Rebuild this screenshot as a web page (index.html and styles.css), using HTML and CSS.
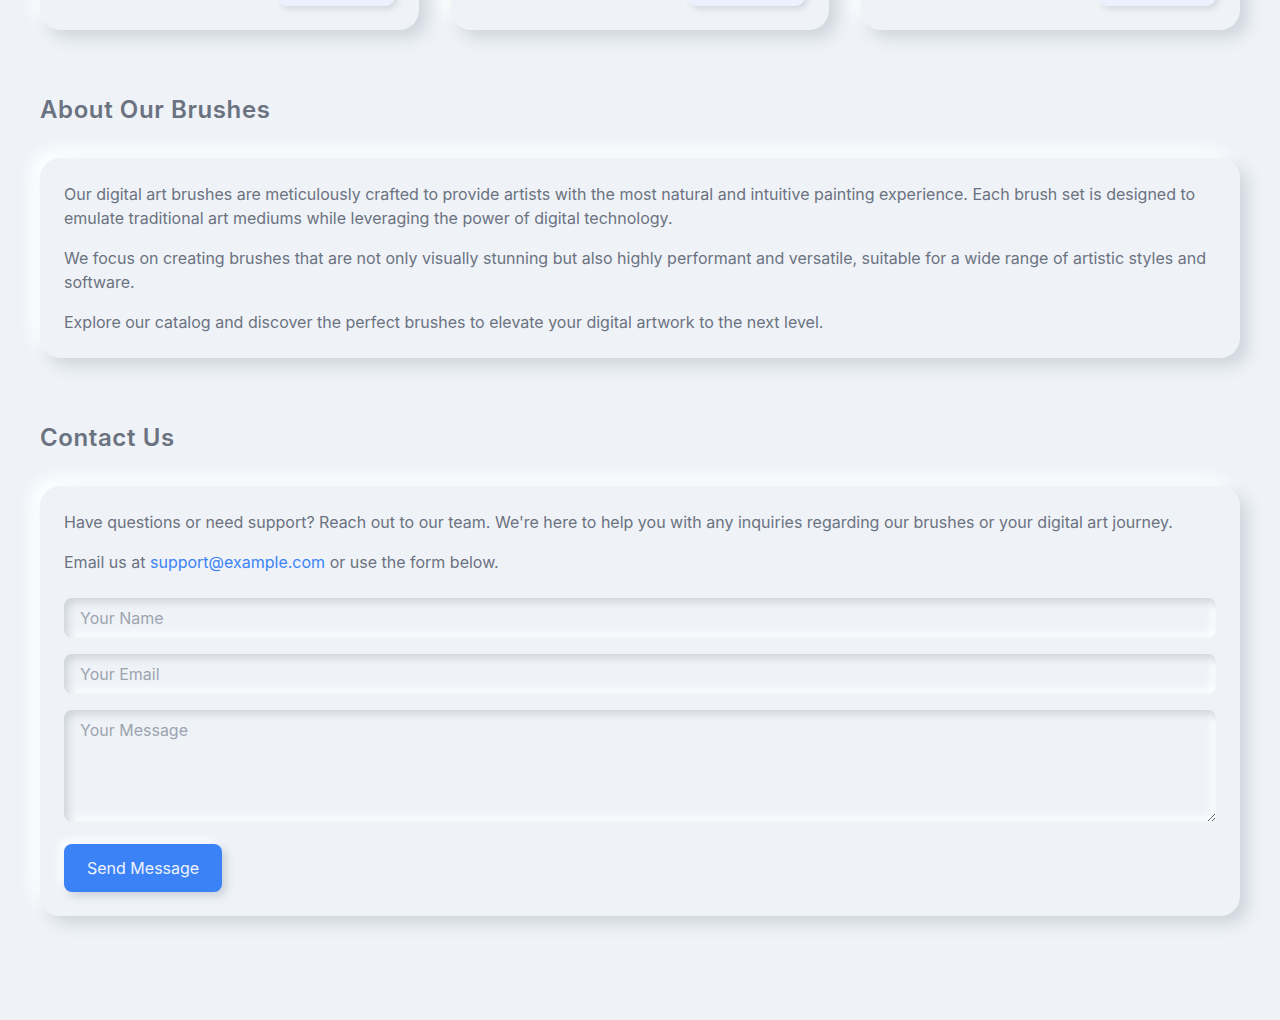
FILE: index.html
```html
<!DOCTYPE html>
<html lang="en">
<head>
<meta charset="utf-8">
<title>Digital Art Brushes</title>
<link rel="stylesheet" href="styles.css">
</head>
<body>
<main class="page">
  <section class="products">
    <div class="product-grid">
      <div class="card product-card">
        <div class="product-footer"><span class="price-slot"></span><button class="add-btn" aria-label="Add to cart"></button></div>
      </div>
      <div class="card product-card">
        <div class="product-footer"><span class="price-slot"></span><button class="add-btn" aria-label="Add to cart"></button></div>
      </div>
      <div class="card product-card">
        <div class="product-footer"><span class="price-slot"></span><button class="add-btn" aria-label="Add to cart"></button></div>
      </div>
    </div>
  </section>

  <section class="section">
    <h2 class="section-title">About Our Brushes</h2>
    <div class="card text-card">
      <p>Our digital art brushes are meticulously crafted to provide artists with the most natural and intuitive painting experience. Each brush set is designed to emulate traditional art mediums while leveraging the power of digital technology.</p>
      <p>We focus on creating brushes that are not only visually stunning but also highly performant and versatile, suitable for a wide range of artistic styles and software.</p>
      <p>Explore our catalog and discover the perfect brushes to elevate your digital artwork to the next level.</p>
    </div>
  </section>

  <section class="section">
    <h2 class="section-title">Contact Us</h2>
    <div class="card text-card">
      <p>Have questions or need support? Reach out to our team. We're here to help you with any inquiries regarding our brushes or your digital art journey.</p>
      <p class="email-line">Email us at <a href="#" class="link">support@example.com</a> or use the form below.</p>
      <form class="contact-form">
        <input class="field" type="text" placeholder="Your Name">
        <input class="field" type="email" placeholder="Your Email">
        <textarea class="field field-area" placeholder="Your Message"></textarea>
        <div class="form-actions"><button type="button" class="send-btn">Send Message</button></div>
      </form>
    </div>
  </section>
</main>
</body>
</html>
```
FILE: styles.css
```css
* { box-sizing: border-box; }
html {
  background: #eff3f8;
}
html, body { margin: 0; padding: 0; }
body {
  background: #eff3f8;
  font-family: Inter, "Noto Sans", sans-serif;
  color: #6b7280;
  font-size: 16px;
  line-height: 24px;
  overflow: hidden;
  min-height: 1020px;
}
.page {
  padding: 0 40px 120px;
}
.card {
  background: #eff3f8;
  border-radius: 20px;
  box-shadow: 8px 8px 16px #cfd5dc, -8px -8px 16px #ffffff;
}
.products {
  margin-top: -57px;
}
.product-grid {
  display: grid;
  grid-template-columns: repeat(3, 1fr);
  gap: 32px;
}
.product-card {
  padding: 24px;
}
.product-footer {
  display: flex;
  justify-content: space-between;
  align-items: center;
}
.price-slot {
  display: block;
  width: 60px;
  height: 24px;
}
.add-btn {
  width: 118px;
  height: 39px;
  border: none;
  border-radius: 10px;
  background: linear-gradient(180deg, #f4f7ff, #eaf0fd);
  box-shadow: 3px 3px 6px #d3d8de, -3px -3px 6px #ffffff;
}
.section {
  margin-top: 64px;
}
.section-title {
  margin: 0 0 32px;
  font-family: Inter, "Noto Sans", sans-serif;
  font-size: 24px;
  line-height: 32px;
  font-weight: 600;
  color: #6b7280;
  letter-spacing: 0.6px;
}
.text-card {
  padding: 24px;
}
.text-card p {
  margin: 0 0 16px;
}
.text-card p:last-child {
  margin-bottom: 0;
}
.text-card .email-line {
  margin-bottom: 24px;
}
.link {
  color: #3b82f6;
  text-decoration: none;
}
.contact-form {
  display: flex;
  flex-direction: column;
  gap: 16px;
}
.field {
  display: block;
  width: 100%;
  height: 40px;
  border: none;
  outline: none;
  border-radius: 8px;
  padding: 8px 16px;
  background: #eff3f8;
  box-shadow: inset 4px 4px 8px #cfd4d9, inset -4px -4px 8px #ffffff;
  font-family: Inter, sans-serif;
  font-size: 16px;
  line-height: 24px;
  color: #6b7280;
}
.field::placeholder {
  color: #9ca3af;
}
.field-area {
  height: 112px;
  resize: vertical;
}
.form-actions {
  margin-top: 6px;
}
.send-btn {
  height: 48px;
  padding: 0 23px;
  border: none;
  border-radius: 8px;
  background: #3b82f6;
  color: #eef3ff;
  font-family: Inter, sans-serif;
  font-size: 16px;
  box-shadow: 4px 4px 10px #c9cfd6, -4px -4px 10px #ffffff;
}
```
